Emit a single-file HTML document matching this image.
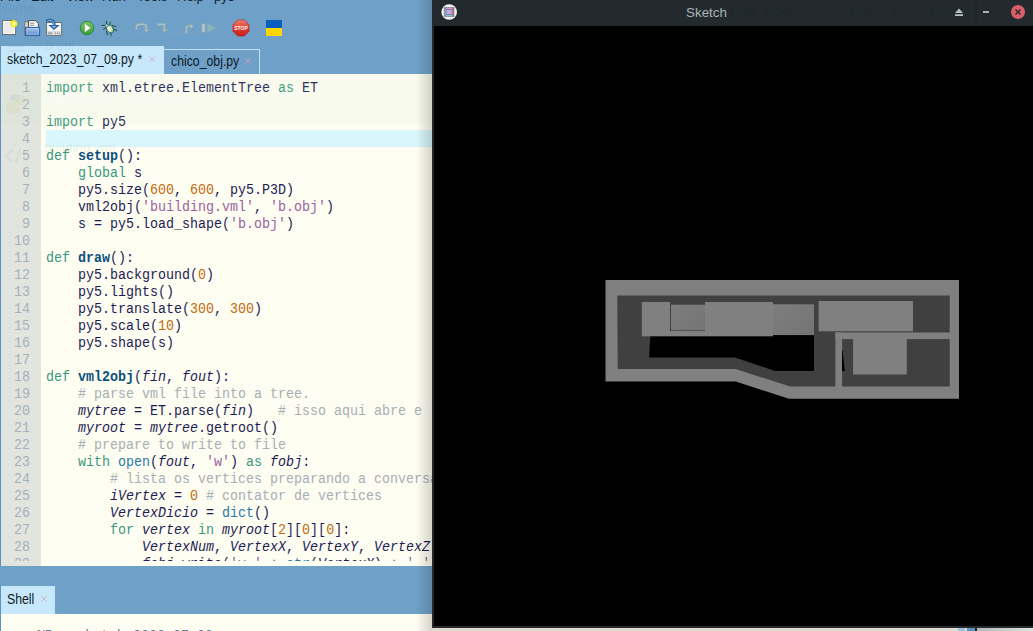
<!DOCTYPE html>
<html><head><meta charset="utf-8">
<style>
*{margin:0;padding:0;box-sizing:border-box}
html,body{width:1033px;height:631px;overflow:hidden;background:#6fa1c8;position:relative}
body{font-family:"Liberation Sans",sans-serif}
.abs{position:absolute}
#menu{left:0;top:-11px;height:14px;font-size:13px;color:#10202c;white-space:nowrap}
#menu span{position:absolute;top:0}
.tab{position:absolute;font-size:14px;line-height:16px;color:#0e1a28;white-space:nowrap;transform:scaleX(0.877);transform-origin:0 0}
.x{position:absolute;font-size:11px;color:#d49aa6}
#gutter{left:1px;top:74px;width:40px;height:492px;background:#e1e5dd}
#code{left:41px;top:74px;width:391px;height:492px;background:#fdfdf1;overflow:hidden}
#hl{left:46px;top:130px;width:386px;height:17px;background:#d8f6fb}
.ln{position:absolute;left:0;width:30px;text-align:right;font:15.5px/17px "Liberation Mono",monospace;color:#a6b0be;margin-top:1px;transform:scaleX(0.8602);transform-origin:100% 0}
.cl{position:absolute;left:46px;font:15.5px/17px "Liberation Mono",monospace;color:#1e1c55;white-space:pre;margin-top:1px;transform:scaleX(0.8602);transform-origin:0 0}
.k{color:#3a9880}
.f{color:#0e5080;font-weight:bold}
.n{color:#c46a10}
.s{color:#9a62a0}
.c{color:#a8aeb6}
.i{font-style:italic}
.b{color:#2a7aa8}
#sketch{left:432px;top:0;width:601px;height:631px}
</style></head><body>
<div id="menu" class="abs">
<span style="left:0">File</span><span style="left:31px">Edit</span><span style="left:66px">View</span><span style="left:102px">Run</span><span style="left:137px">Tools</span><span style="left:177px">Help</span><span style="left:214px">py5</span>
</div>

<!-- toolbar -->
<svg class="abs" style="left:0;top:0" width="300" height="44" viewBox="0 0 300 44">
<defs>
<radialGradient id="yg" cx="0.5" cy="0.5" r="0.5"><stop offset="0" stop-color="#fffef0"/><stop offset="0.35" stop-color="#f8f040"/><stop offset="0.8" stop-color="#f0e820"/><stop offset="1" stop-color="#e8e020" stop-opacity="0"/></radialGradient>
<linearGradient id="gg" x1="0" y1="0" x2="0" y2="1"><stop offset="0" stop-color="#7cc46a"/><stop offset="1" stop-color="#3a9a3a"/></linearGradient>
<linearGradient id="rg" x1="0" y1="0" x2="0" y2="1"><stop offset="0" stop-color="#f08070"/><stop offset="0.5" stop-color="#e03a30"/><stop offset="1" stop-color="#c81e1e"/></linearGradient>
<linearGradient id="bg1" x1="0" y1="0" x2="0" y2="1"><stop offset="0" stop-color="#a8c8ec"/><stop offset="1" stop-color="#5a8ed0"/></linearGradient>
</defs>
<!-- new -->
<rect x="2.7" y="20.5" width="12.9" height="14" fill="#ebebeb" stroke="#6e6c6a" stroke-width="1"/>
<rect x="3.7" y="21.5" width="10.9" height="12" fill="none" stroke="#fafafa" stroke-width="0.9"/>
<circle cx="13.9" cy="23.7" r="4" fill="url(#yg)"/>
<circle cx="13.9" cy="23.7" r="1.3" fill="#fffde8"/>
<!-- open -->
<path d="M24.6,21.8 h4 v13.6 h-4z" fill="#d0d0d0" stroke="#6a6a6a" stroke-width="0.8"/>
<path d="M28.6,20.6 h7 l2.8,2.8 v4.5 h-9.8z" fill="#f4f4f4" stroke="#4a4a4a" stroke-width="1"/>
<path d="M30.2,23.3 h3.8 M30.2,25.3 h3.8" stroke="#7a7a7a" stroke-width="0.8"/>
<rect x="25.6" y="27.4" width="14" height="8.2" fill="url(#bg1)" stroke="#2f62a8" stroke-width="1"/>
<rect x="27" y="28.8" width="11.2" height="5.4" fill="none" stroke="#c0d8f0" stroke-width="0.6" opacity="0.7"/>
<!-- save -->
<rect x="46.6" y="22.5" width="15" height="12.8" fill="#f6f6f6" stroke="#6a6a68" stroke-width="0.9"/>
<rect x="47.2" y="31" width="13.8" height="3.9" fill="#dcdcdc"/>
<path d="M48.5,32.3 v2 M49.5,32.3 v2 M50.5,32.3 v2 M51.5,32.3 v2 M55.5,32.3 v2 M57.5,32.3 v2 M59.5,32.3 v2" stroke="#8a8a8a" stroke-width="0.7"/>
<path d="M46.3,21.2 c3.2,-1.6 7.4,-1.4 7.8,2.6 v2.2" fill="none" stroke="#2a64a0" stroke-width="3"/>
<path d="M47.2,21.1 c3,-1 6,-0.8 6.5,2.6 v2.2" fill="none" stroke="#9cc6ea" stroke-width="1"/>
<path d="M48.4,25 h11.2 l-5.6,5z" fill="#2a64a0"/>
<path d="M51.5,26 h5 l-2.5,2.3z" fill="#8cbce4"/>
<!-- run -->
<circle cx="87" cy="28" r="6.8" fill="url(#gg)" stroke="#1f8a2c" stroke-width="0.9"/>
<path d="M84.8,23.8 l5.6,4.2 l-5.6,4.2z" fill="#fff"/>
<!-- debug -->
<defs><radialGradient id="bugg" cx="0.35" cy="0.35" r="0.7"><stop offset="0" stop-color="#f2f8ea"/><stop offset="0.6" stop-color="#c8e4b0"/><stop offset="1" stop-color="#78b860"/></radialGradient></defs>
<g stroke="#28482e" stroke-width="1.0" fill="none" stroke-linecap="round">
<path d="M106.4,21.2 L106.6,24.3 M110.5,22.3 L109.3,24.8 M102.1,25.5 L105.3,25.5 M112.3,25.5 L115.8,26.6 M103.4,29.4 L105.6,28.2 M114.2,29.4 L116.9,30.5 M106.3,31.3 L107.5,34.8 M110.4,33.2 L111.5,35.5"/>
</g>
<ellipse cx="110.1" cy="29" rx="3.3" ry="4.3" transform="rotate(-35 110.1 29)" fill="url(#bugg)" stroke="#1e6070" stroke-width="0.9"/>
<circle cx="106.8" cy="25.6" r="1.4" fill="#e8f4e0" stroke="#1e6070" stroke-width="0.7"/>
<!-- disabled step icons -->
<g fill="none" stroke-linecap="butt" stroke-linejoin="miter">
<path d="M136.5,29.5 v-2.5 c0,-1.8 1,-2.6 3,-2.6 h4.5 c1.6,0 2.3,0.8 2.3,2.5 v2" stroke="#8aa3b0" stroke-width="2.8"/>
<path d="M136.5,29.5 v-2.5 c0,-1.8 1,-2.6 3,-2.6 h4.5 c1.6,0 2.3,0.8 2.3,2.5 v2" stroke="#a9c2cc" stroke-width="1.3"/>
<path d="M157.6,24.5 h6.8 v5" stroke="#8aa3b0" stroke-width="2.8"/>
<path d="M157.6,24.5 h6.8 v5" stroke="#a9c2cc" stroke-width="1.3"/>
<path d="M186.3,33.3 v-5 c0,-1.5 0.6,-2.1 2,-2.1 h2" stroke="#8aa3b0" stroke-width="2.8"/>
<path d="M186.3,33.3 v-5 c0,-1.5 0.6,-2.1 2,-2.1 h2" stroke="#a9c2cc" stroke-width="1.3"/>
</g>
<g fill="#a9c2cc" stroke="#8aa3b0" stroke-width="0.9">
<path d="M143.3,29 h6.2 l-3.1,3.4z"/>
<path d="M161.2,29 h6.2 l-3.1,3.4z"/>
<path d="M189.9,23.3 l3.9,2.9 l-3.9,3.2z"/>
<rect x="201.6" y="23.6" width="3.8" height="8.9"/>
</g>
<path d="M207.3,23.3 l8.5,4.7 l-8.5,4.7z" fill="#86b4bc" stroke="#7eaab6" stroke-width="0.5"/>
<g stroke="#90a8b4" stroke-width="1" fill="none" opacity="0.8">
<path d="M139.5,33.5 h3.4 M157.3,33.5 h3.4 M168.4,33.5 h3.4 M179.4,33.5 h3.4 M190.3,33.5 h3.4"/>
</g>
<!-- stop -->
<path d="M237.7,20 h6.6 l4.7,4.7 v6.6 l-4.7,4.7 h-6.6 l-4.7,-4.7 v-6.6z" fill="url(#rg)" stroke="#b81818" stroke-width="0.6"/>
<text x="234.3" y="30.2" font-family="Liberation Sans" font-weight="bold" font-size="5.8" fill="#fff" textLength="13.4" lengthAdjust="spacingAndGlyphs">STOP</text>
<!-- flag -->
<rect x="266" y="20" width="16" height="8" fill="#0a5ec0"/>
<rect x="266" y="28" width="16" height="8" fill="#ffd400"/>
</svg>

<!-- tabs -->
<div class="abs" style="left:0;top:46px;width:1px;height:520px;background:#5c92c2"></div><div class="abs" style="left:0;top:586px;width:1px;height:45px;background:#5c92c2"></div>
<div class="abs" style="left:1px;top:46px;width:163px;height:28px;background:#c7e8fa"></div>
<div class="tab" style="left:7px;top:51px">sketch_2023_07_09.py *</div>
<div class="abs" style="left:164px;top:49px;width:96px;height:25px;background:#6fa1c8;border:1px solid #c0e0f4;border-bottom:none;border-left:none"></div>
<div class="tab" style="left:171px;top:53px">chico_obj.py</div>

<div id="gutter" class="abs"></div>
<div id="code" class="abs"></div>
<div id="hl" class="abs"></div>

<div id="lines" class="abs" style="left:0;top:0;width:432px;height:561px;overflow:hidden">
<div class="ln" style="top:79px">1</div><div class="cl" style="top:79px"><span class=k>import</span> xml.etree.ElementTree <span class=k>as</span> ET</div>
<div class="ln" style="top:96px">2</div><div class="cl" style="top:96px"></div>
<div class="ln" style="top:113px">3</div><div class="cl" style="top:113px"><span class=k>import</span> py5</div>
<div class="ln" style="top:130px">4</div><div class="cl" style="top:130px"></div>
<div class="ln" style="top:147px">5</div><div class="cl" style="top:147px"><span class=k>def</span> <span class=f>setup</span>():</div>
<div class="ln" style="top:164px">6</div><div class="cl" style="top:164px">    <span class=k>global</span> s</div>
<div class="ln" style="top:181px">7</div><div class="cl" style="top:181px">    py5.size(<span class=n>600</span>, <span class=n>600</span>, py5.P3D)</div>
<div class="ln" style="top:198px">8</div><div class="cl" style="top:198px">    vml2obj(<span class=s>'building.vml'</span>, <span class=s>'b.obj'</span>)</div>
<div class="ln" style="top:215px">9</div><div class="cl" style="top:215px">    s = py5.load_shape(<span class=s>'b.obj'</span>)</div>
<div class="ln" style="top:232px">10</div><div class="cl" style="top:232px"></div>
<div class="ln" style="top:249px">11</div><div class="cl" style="top:249px"><span class=k>def</span> <span class=f>draw</span>():</div>
<div class="ln" style="top:266px">12</div><div class="cl" style="top:266px">    py5.background(<span class=n>0</span>)</div>
<div class="ln" style="top:283px">13</div><div class="cl" style="top:283px">    py5.lights()</div>
<div class="ln" style="top:300px">14</div><div class="cl" style="top:300px">    py5.translate(<span class=n>300</span>, <span class=n>300</span>)</div>
<div class="ln" style="top:317px">15</div><div class="cl" style="top:317px">    py5.scale(<span class=n>10</span>)</div>
<div class="ln" style="top:334px">16</div><div class="cl" style="top:334px">    py5.shape(s)</div>
<div class="ln" style="top:351px">17</div><div class="cl" style="top:351px"></div>
<div class="ln" style="top:368px">18</div><div class="cl" style="top:368px"><span class=k>def</span> <span class=f>vml2obj</span>(<span class=i>fin</span>, <span class=i>fout</span>):</div>
<div class="ln" style="top:385px">19</div><div class="cl" style="top:385px">    <span class=c># parse vml file into a tree.</span></div>
<div class="ln" style="top:402px">20</div><div class="cl" style="top:402px">    <span class=i>mytree</span> = ET.parse(<span class=i>fin</span>)   <span class=c># isso aqui abre e le o arquivo</span></div>
<div class="ln" style="top:419px">21</div><div class="cl" style="top:419px">    <span class=i>myroot</span> = <span class=i>mytree</span>.getroot()</div>
<div class="ln" style="top:436px">22</div><div class="cl" style="top:436px">    <span class=c># prepare to write to file</span></div>
<div class="ln" style="top:453px">23</div><div class="cl" style="top:453px">    <span class=k>with</span> <span class=b>open</span>(<span class=i>fout</span>, <span class=s>'w'</span>) <span class=k>as</span> <span class=i>fobj</span>:</div>
<div class="ln" style="top:470px">24</div><div class="cl" style="top:470px">        <span class=c># lista os vertices preparando a conversao</span></div>
<div class="ln" style="top:487px">25</div><div class="cl" style="top:487px">        <span class=i>iVertex</span> = <span class=n>0</span> <span class=c># contator de vertices</span></div>
<div class="ln" style="top:504px">26</div><div class="cl" style="top:504px">        <span class=i>VertexDicio</span> = <span class=b>dict</span>()</div>
<div class="ln" style="top:521px">27</div><div class="cl" style="top:521px">        <span class=k>for</span> <span class=i>vertex</span> <span class=k>in</span> <span class=i>myroot</span>[<span class=n>2</span>][<span class=n>0</span>][<span class=n>0</span>]:</div>
<div class="ln" style="top:538px">28</div><div class="cl" style="top:538px">            <span class=i>VertexNum</span>, <span class=i>VertexX</span>, <span class=i>VertexY</span>, <span class=i>VertexZ</span> = vertex</div>
<div class="ln" style="top:555px">29</div><div class="cl" style="top:555px">            <span class=i>fobj</span>.write(<span class=s>'v '</span> + <span class=b>str</span>(<span class=i>VertexX</span>) + <span class=s>' '</span></div>
</div>

<!-- ghost overlay -->
<div class="abs" style="left:1px;top:74px;width:431px;height:50px;background:rgba(195,225,200,0.1)"></div>
<div class="abs" style="left:44px;top:90.5px;font-size:13.5px;line-height:16px;color:rgba(255,255,255,0.55);white-space:nowrap">sketch_2023_07_09.py</div>
<div class="abs" style="left:44px;top:140px;font-size:13.5px;line-height:16px;color:rgba(110,120,110,0.11);white-space:nowrap">building.vml</div>
<div class="abs" style="left:45px;top:38px;font-size:13.5px;line-height:16px;color:rgba(40,70,100,0.08);white-space:nowrap">b.obj</div>
<div class="abs" style="left:-2px;top:0px;font-size:13.5px;font-weight:bold;line-height:16px;color:rgba(30,60,90,0.08);white-space:nowrap">Name</div>
<svg class="abs" style="left:0;top:0" width="60" height="190">
<g opacity="0.09">
<path d="M15,95 c-5,0 -5,2 -5,4 v2 h6 v1 h-7 c-3,0 -3,3 -3,5 c0,3 1,5 3,5 h2 v-3 c0,-2 2,-3 4,-3 h5 c2,0 3,-1 3,-3 v-5 c0,-2 -2,-3 -5,-3z" fill="#5080b0"/>
<path d="M15,113 c5,0 5,-2 5,-4 v-2 h-6 v-1 h7 c3,0 3,-3 3,-5 c0,-3 -1,-5 -3,-5 h-2 v3 c0,2 -2,3 -4,3 h-5 c-2,0 -3,1 -3,3 v5 c0,2 2,3 5,3z" fill="#d0b040"/>
</g>
<g opacity="0.07" stroke="#607080" stroke-width="2" fill="none">
<path d="M12,150 l-6,6 l6,6 M16,163 l4,-14"/>
</g>
<g opacity="0.10" stroke="#405060" stroke-width="1" fill="none">
<path d="M8,46.5 h17 M8,51 h17"/>
</g>
</svg>
<!-- sash + shell -->
<div class="abs" style="left:1px;top:586px;width:54px;height:28px;background:#c7e8fa"></div>
<div class="tab" style="left:7px;top:591px">Shell</div>
<div class="abs" style="left:1px;top:614px;width:431px;height:17px;background:#fdfdf1"></div>
<div class="cl" style="left:37px;top:627px;color:#6a7a94">%Run sketch_2023_07_09.py</div>

<svg class="abs" style="left:0;top:0" width="432" height="631">
<g stroke="#d8a4b8" stroke-width="0.85" fill="none">
<path d="M149.5,56.5 l5.5,5.5 M155,56.5 l-5.5,5.5"/>
<path d="M245,58 l5.5,5.5 M250.5,58 l-5.5,5.5"/>
<path d="M41.3,596.3 l5.5,5.5 M46.8,596.3 l-5.5,5.5"/>
</g></svg>
<!-- sketch window -->
<div class="abs" style="left:416px;top:0;width:16px;height:631px;background:linear-gradient(to right,rgba(0,0,0,0),rgba(0,0,0,0.16))"></div>
<div class="abs" style="left:432px;top:628px;width:601px;height:3px;background:#dcdcd0"></div>
<div class="abs" style="left:958px;top:628px;width:7px;height:3px;background:#9cc4e0"></div>
<div class="abs" style="left:967px;top:628px;width:8px;height:3px;background:#5f92bd"></div>
<div class="abs" style="left:975px;top:628px;width:2px;height:3px;background:#1e2428"></div>
<div class="abs" style="left:977px;top:628px;width:56px;height:3px;background:linear-gradient(to right,#b8b8b8,#e0e0e0)"></div>
<div id="sketch" class="abs">
  <div class="abs" style="left:0;top:0;width:601px;height:628px;background:#222a2d"></div>
  <div class="abs" style="left:2px;top:26px;width:599px;height:600px;background:#000"></div>
  <div class="abs" style="left:254px;top:0;width:80px;height:26px;font-size:13.4px;line-height:25px;color:#aab4b8">Sketch</div>
  <div class="abs" style="left:297px;top:3px;font-size:14px;line-height:16px;color:rgba(0,0,0,0.08);white-space:nowrap">Date Modified</div>
  <div class="abs" style="left:418px;top:3px;font-size:14px;line-height:16px;color:rgba(0,0,0,0.08);white-space:nowrap">Date Created</div>
</div>
<svg class="abs" style="left:432px;top:0" width="601" height="631" viewBox="432 0 601 631">
<defs>
<linearGradient id="mg" x1="0" y1="0" x2="1" y2="1"><stop offset="0" stop-color="#7e7e7e"/><stop offset="1" stop-color="#747474"/></linearGradient>
</defs>
<!-- title icon -->
<circle cx="449.2" cy="12" r="7.8" fill="#f4f4f4"/>
<path d="M444.3,7.6 h9.6 l-1.6,1.8 h-6.4z" fill="#e8a0d8"/>
<path d="M444.3,7.6 l1.6,1.8 v5.2 l-1.6,1.8z" fill="#8cd0ec"/>
<path d="M453.9,7.6 l-1.6,1.8 v5.2 l1.6,1.8z" fill="#f07890"/>
<path d="M444.3,16.4 l1.6,-1.8 h6.4 l1.6,1.8z" fill="#90d8d8"/>
<rect x="445.9" y="9.4" width="6.4" height="5.2" fill="#c8a8e4"/>
<path d="M444.3,7.6 h9.6 v8.8 h-9.6z M445.9,9.4 h6.4 v5.2 h-6.4z M444.3,7.6 l1.6,1.8 M453.9,7.6 l-1.6,1.8 M444.3,16.4 l1.6,-1.8 M453.9,16.4 l-1.6,-1.8" fill="none" stroke="#3a3a48" stroke-width="0.5"/>
<!-- buttons -->
<path d="M955,13 l4,-4.5 l4,4.5z" fill="#b4c0c4"/>
<rect x="955" y="14.2" width="8" height="1.8" fill="#b4c0c4"/>
<rect x="983" y="11" width="6" height="2" fill="#a8b0b4"/>
<circle cx="1018" cy="12" r="7" fill="#d8606a"/>
<path d="M1015.5,9.5 l5,5 M1020.5,9.5 l-5,5" stroke="#2a2a2a" stroke-width="1.5"/>
<rect x="975.5" y="0" width="1" height="26" fill="#1c2326"/>
<!-- shape -->
<polygon points="605.5,280 959,280 959,398.7 789,398.7 735.8,381.6 605.5,381.6" fill="#808080"/>
<polygon points="617.3,295.4 949.7,295.4 949.7,386.5 790.2,386.5 735.5,369.1 617.7,369.1" fill="#404040"/>
<polygon points="650.4,335 814,335 814,371 775,371 735,357.4 649,357.4" fill="#000"/>
<rect x="641.8" y="302" width="131.2" height="34.3" fill="#808080"/>
<rect x="670" y="302" width="35" height="29" fill="#404040"/>
<rect x="671" y="304.7" width="34" height="25.6" fill="url(#mg)"/>
<rect x="773" y="304.3" width="41" height="30.8" fill="url(#mg)"/>
<rect x="818.6" y="301" width="94.4" height="30.3" fill="#808080"/>
<rect x="835.4" y="332.5" width="120" height="6.6" fill="#808080"/>
<rect x="835.4" y="332.5" width="6.7" height="58" fill="#808080"/>
<rect x="853.1" y="338.5" width="53.7" height="36" fill="#808080"/>
<polygon points="842,350.3 842.6,350.3 844.8,371 842,371" fill="#000"/>
</svg>
</body></html>
